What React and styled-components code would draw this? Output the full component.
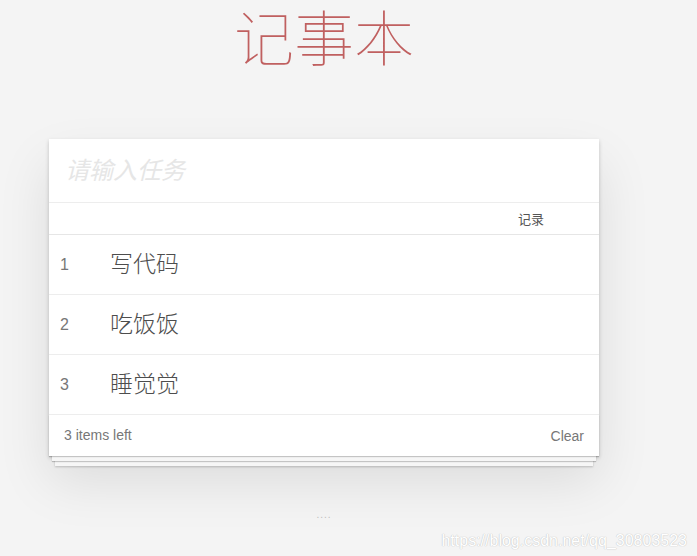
import React, {useState} from 'react';
import styled, {createGlobalStyle} from 'styled-components';

const GlobalStyle = createGlobalStyle`
    html, body {
        margin: 0;
        padding: 0;
        background: #f4f4f4;
        font-family: "Liberation Sans", "Noto Sans CJK SC", sans-serif;
        color: #4d4d4d;
        overflow: hidden;
    }
`

const Page = styled.div`
    position: relative;
    height: 556px;
    width: 697px;
`

const Wrapper = styled.div`
    width: 550px;
    margin-left: 49px;
    display: flex;
    flex-direction: column;
`

const Title = styled.h1`
    margin: 0;
    height: 139px;
    text-align: center;
    font-family: "Noto Sans CJK SC", sans-serif;
    font-size: 60px;
    font-weight: 100;
    line-height: 70px;
    color: rgba(175, 47, 47, 0.75);
`

const Card = styled.section`
    position: relative;
    background: #fff;
    box-shadow: 0 2px 4px 0 rgba(0, 0, 0, 0.2), 0 25px 50px 0 rgba(0, 0, 0, 0.1);
`

const Input = styled.input`
    display: block;
    box-sizing: border-box;
    width: 100%;
    height: 64px;
    padding: 0 16px;
    border: none;
    border-bottom: 1px solid #ededed;
    outline: none;
    background: transparent;
    font-family: "Liberation Sans", "Noto Sans CJK SC", sans-serif;
    font-size: 24px;
    color: #4d4d4d;

    &::placeholder {
        font-style: italic;
        color: #e6e6e6;
    }
`

const HeadRow = styled.div`
    height: 31px;
    display: flex;
    align-items: center;
    justify-content: flex-end;
    padding-right: 55px;
    border-bottom: 1px solid #e6e6e6;
    font-family: "Noto Sans CJK SC", sans-serif;
    font-size: 13px;
    color: #555;
`

const List = styled.ul`
    margin: 0;
    padding: 0;
    list-style: none;
`

const Item = styled.li`
    height: 59px;
    display: flex;
    align-items: center;
    border-bottom: 1px solid #ededed;
`

const Index = styled.span`
    width: 50px;
    padding-left: 11px;
    font-size: 16px;
    color: #777;
`

const Text = styled.span`
    position: relative;
    top: -2px;
    font-family: "Noto Sans CJK SC", sans-serif;
    font-size: 23px;
    font-weight: 300;
    color: #4d4d4d;
    line-height: 1;
`

const Footer = styled.footer`
    position: relative;
    height: 41px;
    display: flex;
    align-items: center;
    justify-content: space-between;
    padding: 0 15px;
    font-size: 14px;
    color: #777;

    &:before {
        content: '';
        position: absolute;
        left: 0;
        right: 0;
        bottom: 0;
        height: 41px;
        overflow: hidden;
        box-shadow: 0 1px 1px rgba(0, 0, 0, 0.2),
            0 8px 0 -3px #f6f6f6,
            0 9px 1px -3px rgba(0, 0, 0, 0.2),
            0 16px 0 -6px #f6f6f6,
            0 17px 2px -6px rgba(0, 0, 0, 0.2);
    }
`

const Count = styled.span`
    position: relative;
    top: -1px;
`

const ClearButton = styled.button`
    position: relative;
    border: none;
    background: none;
    padding: 0;
    font-family: "Liberation Sans", sans-serif;
    font-size: 14px;
    color: #777;
    cursor: pointer;
`

const Info = styled.p`
    margin: 53px 0 0;
    text-align: center;
    font-size: 10px;
    letter-spacing: 1px;
    color: #bfbfbf;
`

const Watermark = styled.div`
    position: absolute;
    right: 10px;
    bottom: 6px;
    font-family: "Liberation Sans", sans-serif;
    font-size: 16px;
    color: #fff;
    text-shadow: 0 0 1px #c4c4c4, 0 0 1px #c4c4c4;
`

const App = () => {
    const [todos, setTodos] = useState(['写代码', '吃饭饭', '睡觉觉']);
    const [value, setValue] = useState('');

    const addTodo = e => {
        if (e.key === 'Enter' && value.trim()) {
            setTodos([...todos, value.trim()]);
            setValue('');
        }
    }

    return (
        <Page>
            <GlobalStyle />
            <Wrapper>
                <Title>记事本</Title>
                <Card>
                    <Input
                        placeholder="请输入任务"
                        value={value}
                        onChange={e => setValue(e.target.value)}
                        onKeyDown={addTodo}
                    />
                    <HeadRow>记录</HeadRow>
                    <List>
                        {todos.map((todo, i) => (
                            <Item key={i}>
                                <Index>{i + 1}</Index>
                                <Text>{todo}</Text>
                            </Item>
                        ))}
                    </List>
                    <Footer>
                        <Count>{todos.length} items left</Count>
                        <ClearButton onClick={() => setTodos([])}>Clear</ClearButton>
                    </Footer>
                </Card>
                <Info>....</Info>
            </Wrapper>
            <Watermark>https://blog.csdn.net/qq_30803523</Watermark>
        </Page>
    )
}

export default App;
